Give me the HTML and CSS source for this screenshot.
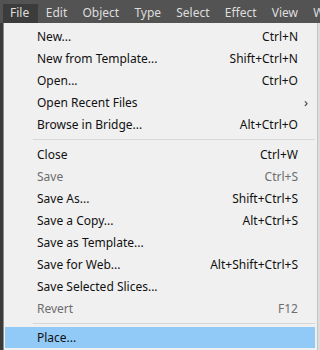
FILE: index.html
```html
<!doctype html>
<html>
  <head>
    <meta charset="UTF-8" />
    <title>File menu</title>
    <link rel="stylesheet" href="styles.css">
  </head>
  <body>
    <nav class="menubar">
      <span class="menubar-item active">File</span>
      <span class="menubar-item">Edit</span>
      <span class="menubar-item">Object</span>
      <span class="menubar-item">Type</span>
      <span class="menubar-item">Select</span>
      <span class="menubar-item">Effect</span>
      <span class="menubar-item">View</span>
      <span class="menubar-item">Window</span>
    </nav>

    <ul class="menu">
      <li class="menu-row"><span>New...</span><span class="key">Ctrl+N</span></li>
      <li class="menu-row"><span>New from Template...</span><span class="key">Shift+Ctrl+N</span></li>
      <li class="menu-row"><span>Open...</span><span class="key">Ctrl+O</span></li>
      <li class="menu-row"><span>Open Recent Files</span><span class="key"></span><span class="arrow">&#8250;</span></li>
      <li class="menu-row"><span>Browse in Bridge...</span><span class="key">Alt+Ctrl+O</span></li>
      <li class="separator"></li>
      <li class="menu-row"><span>Close</span><span class="key">Ctrl+W</span></li>
      <li class="menu-row disabled"><span>Save</span><span class="key">Ctrl+S</span></li>
      <li class="menu-row"><span>Save As...</span><span class="key">Shift+Ctrl+S</span></li>
      <li class="menu-row"><span>Save a Copy...</span><span class="key">Alt+Ctrl+S</span></li>
      <li class="menu-row"><span>Save as Template...</span><span class="key"></span></li>
      <li class="menu-row"><span>Save for Web...</span><span class="key">Alt+Shift+Ctrl+S</span></li>
      <li class="menu-row"><span>Save Selected Slices...</span><span class="key"></span></li>
      <li class="menu-row disabled"><span>Revert</span><span class="key">F12</span></li>
      <li class="separator"></li>
      <li class="menu-row hover"><span>Place...</span><span class="key"></span></li>
    </ul>
  </body>
</html>
```

FILE: styles.css
```css
*,
*::before,
*::after {
  margin: 0;
  padding: 0;
  box-sizing: border-box;
}

body {
  width: 320px;
  height: 350px;
  overflow: hidden;
  background-color: #3a3a3a;
  font-family: "Noto Sans", "Open Sans", sans-serif;
  font-size: 12px;
}

.menubar {
  height: 23px;
  display: flex;
  padding-left: 3px;
  background-color: #535353;
  white-space: nowrap;
  overflow: hidden;
}

.menubar-item {
  margin-top: 4px;
  height: 19px;
  line-height: 18px;
  padding: 0 7.6px;
  color: #dedede;
}

.menubar-item.active {
  background-color: #3c3c3c;
  padding: 0 9px 0 7px;
}

.menu {
  list-style: none;
  margin-left: 3px;
  width: 315px;
  height: 327px;
  padding: 2px 2px 0 1px;
  background-color: #f0f0f0;
  border-left: 1px solid #8c8c8c;
  border-right: 1px solid #c4c4c4;
  box-shadow: 2px 0 0 #dcdcdc;
  color: #111;
}

.menu-row {
  height: 22px;
  display: grid;
  grid-template-columns: 1fr auto 17px;
  align-items: center;
  padding-left: 32px;
}

.menu-row .key {
  text-align: right;
}

.arrow {
  font-size: 13px;
  padding-left: 6px;
  color: #333;
}

.menu-row.disabled {
  color: #6d6d6d;
}

.menu-row.hover {
  background-color: #91c9f7;
  height: 21px;
}

.separator {
  height: 8px;
  margin-left: 28px;
  border-top: 4px solid #f0f0f0;
  border-bottom: 3px solid #f0f0f0;
  background-color: #d7d7d7;
}
```
